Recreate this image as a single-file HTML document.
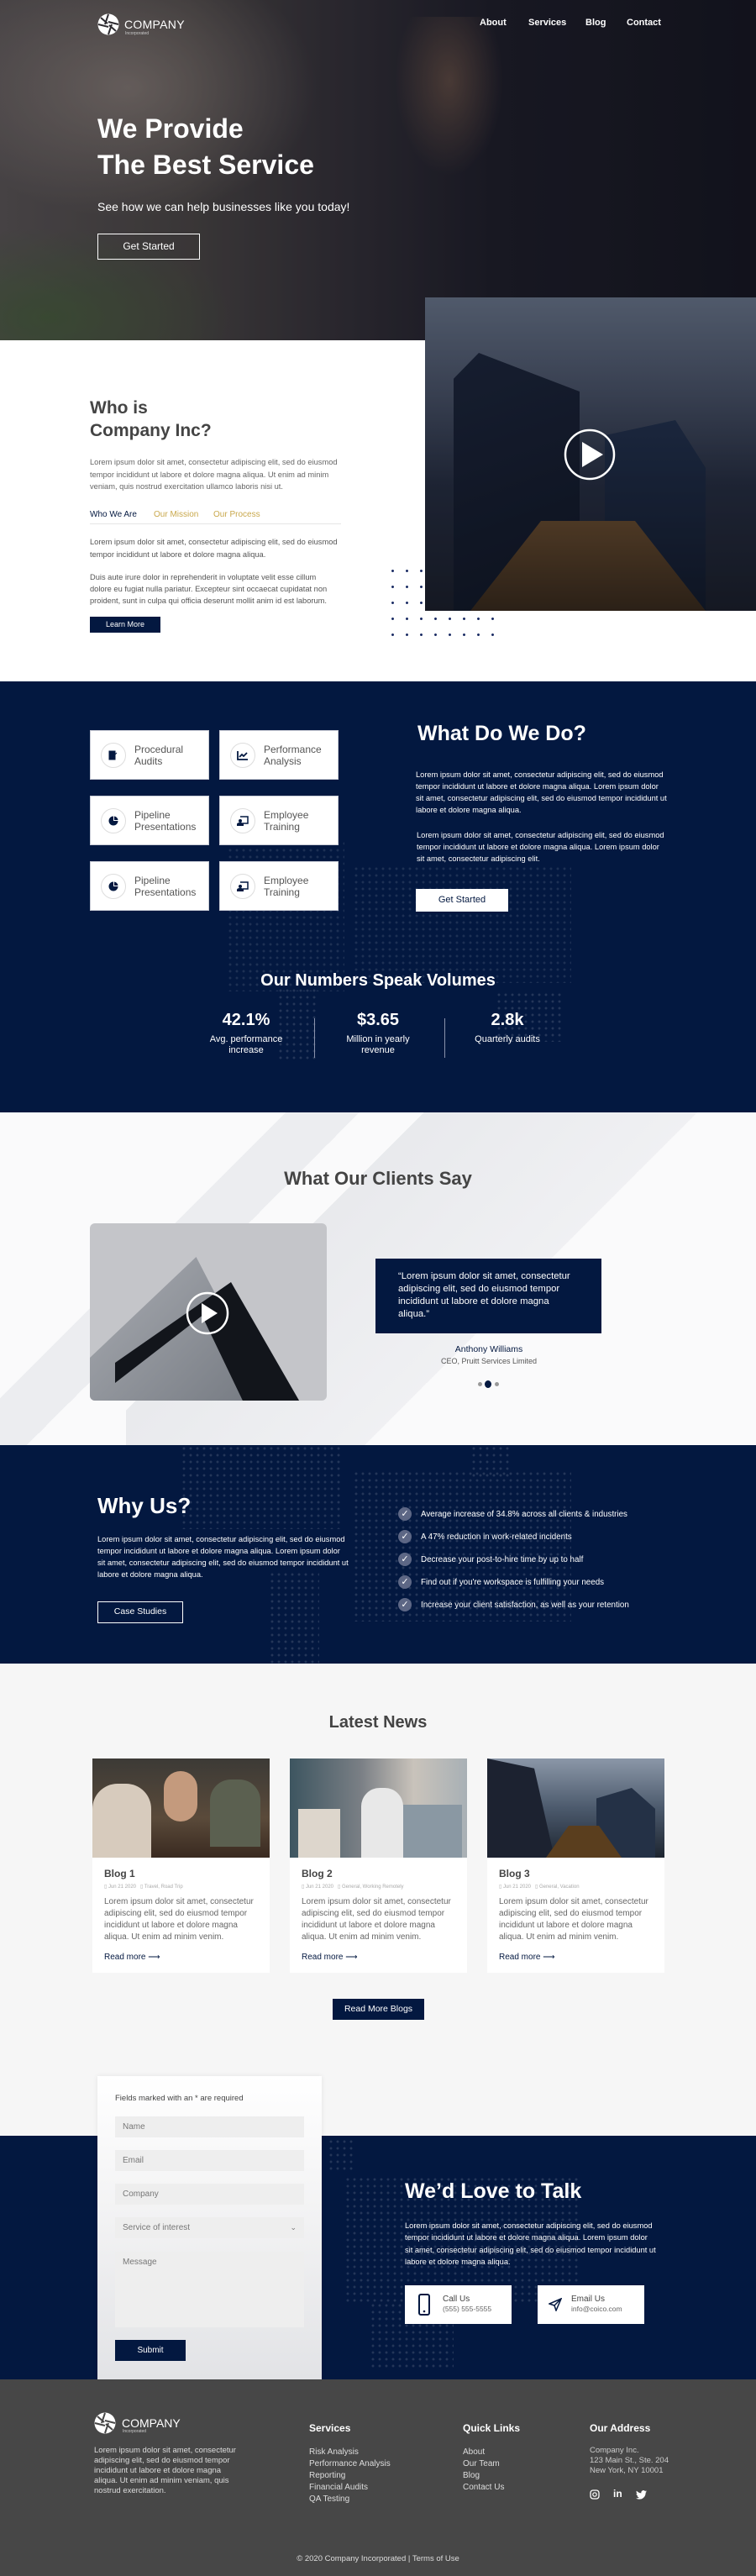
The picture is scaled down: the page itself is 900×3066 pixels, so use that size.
<!DOCTYPE html>
<html><head><meta charset="utf-8"><style>
*{margin:0;padding:0;box-sizing:border-box}
body{width:900px;height:3066px;position:relative;font-family:"Liberation Sans",sans-serif;background:#fff;overflow:hidden}
.a{position:absolute}
.navy{background:#031840}
.dots{background-image:radial-gradient(circle,rgba(255,255,255,.13) 1.3px,transparent 1.6px);background-size:8px 8px}
.ddots{background-image:radial-gradient(circle,#1e2f66 1.3px,transparent 1.7px);background-size:17px 19px}
p{margin:0}
.card{background:#fff;border:1px solid #c9ccd6}
.ic{position:absolute;left:12px;top:14px;width:30px;height:30px;border:1px solid #ddd;border-radius:50%;display:flex;align-items:center;justify-content:center}
.ct{position:absolute;left:52px;top:15px;font-size:12px;color:#555;line-height:14px}
.wt{color:#fff}
.blog{background:#fff}
.blog h4{position:absolute;left:14px;top:130px;font-size:12px;color:#444}
.blog .m{position:absolute;left:14px;top:149px;font-size:6px;color:#aaa}
.blog .p{position:absolute;left:14px;top:164px;width:185px;font-size:10px;line-height:14px;color:#666}
.blog .r{position:absolute;left:14px;top:231px;font-size:10px;color:#031840}
.inp{position:absolute;left:21px;width:225px;height:25px;background:#eee;font-size:10px;color:#777;padding:7px 9px}
.fh{font-size:12px;font-weight:bold;color:#fff}
.fl{font-size:10px;color:#ddd;line-height:14px}
</style></head><body>

<!-- HERO -->
<div class="a" style="left:0;top:0;width:900px;height:405px;background:linear-gradient(90deg,#55504f 0%,#46423f 25%,#312e33 45%,#1c1c25 65%,#14151d 100%)"></div>
<div class="a" style="left:0;top:0;width:380px;height:260px;background:radial-gradient(ellipse at 40% 40%,rgba(170,155,145,.5),transparent 70%)"></div>
<div class="a" style="left:0;top:270px;width:280px;height:135px;background:radial-gradient(ellipse at 20% 80%,rgba(60,95,45,.6),transparent 70%)"></div>
<div class="a" style="left:470px;top:20px;width:130px;height:190px;background:radial-gradient(ellipse at 50% 40%,rgba(170,125,90,.4),transparent 70%)"></div>
<div class="a" style="left:0;top:0;width:900px;height:405px;background:rgba(10,12,25,.2)"></div>
<svg class="a" style="left:116px;top:16px" width="26" height="26" viewBox="0 0 26 26"><circle cx="13" cy="13" r="12.5" fill="#fff"/><path d="M13 1 L9 13 M25 13 L13 10 M13 25 L17 13 M1 13 L13 16 M4 5 L12 12 M22 21 L14 14" stroke="#2d2b30" stroke-width="2"/></svg>
<div class="a" style="left:148px;top:21px;font-size:14px;color:#fff;letter-spacing:.3px">COMPANY</div>
<div class="a" style="left:149px;top:37px;font-size:5px;color:#ccc">Incorporated</div>
<div class="a" style="left:571px;top:21px;font-size:11px;font-weight:bold;color:#fff">About</div>
<div class="a" style="left:629px;top:21px;font-size:11px;font-weight:bold;color:#fff">Services</div>
<div class="a" style="left:697px;top:21px;font-size:11px;font-weight:bold;color:#fff">Blog</div>
<div class="a" style="left:746px;top:21px;font-size:11px;font-weight:bold;color:#fff">Contact</div>
<div class="a" style="left:116px;top:132px;font-size:32px;font-weight:bold;color:#fff;line-height:43px">We Provide<br>The Best Service</div>
<div class="a" style="left:116px;top:238px;font-size:14px;color:#fff">See how we can help businesses like you today!</div>
<div class="a" style="left:116px;top:278px;width:122px;height:31px;border:1.5px solid #fff;color:#fff;font-size:12px;text-align:center;line-height:28px">Get Started</div>

<!-- WHO IS -->
<div class="a" style="left:506px;top:354px;width:394px;height:373px;background:linear-gradient(180deg,#6f7a8a 0%,#4d5565 30%,#262c3a 60%,#1a1c22 100%)"></div>
<div class="a" style="left:540px;top:420px;width:150px;height:307px;background:linear-gradient(160deg,#1c2435,#0f131c);clip-path:polygon(20% 0,100% 15%,100% 100%,0 100%,0 10%)"></div>
<div class="a" style="left:720px;top:500px;width:120px;height:227px;background:linear-gradient(180deg,#223048,#111722);clip-path:polygon(0 8%,70% 0,100% 25%,100% 100%,0 100%)"></div>
<div class="a" style="left:560px;top:620px;width:280px;height:107px;background:linear-gradient(180deg,#6a4a25,#3a2812);clip-path:polygon(30% 0,70% 0,100% 100%,0 100%)"></div>
<div class="a" style="left:506px;top:354px;width:394px;height:373px;background:rgba(10,15,35,.3)"></div>
<svg class="a" style="left:671px;top:509px" width="62" height="64" viewBox="0 0 62 64"><circle cx="31" cy="32" r="29" fill="none" stroke="#fff" stroke-width="2.5"/><path d="M22 17 L47 32 L22 47 Z" fill="#fff"/></svg>
<div class="a ddots" style="left:459px;top:670px;width:51px;height:95px"></div>
<div class="a ddots" style="left:510px;top:727px;width:85px;height:38px"></div>
<div class="a" style="left:107px;top:472px;font-size:21px;font-weight:bold;color:#444;line-height:27px">Who is<br>Company Inc?</div>
<div class="a" style="left:107px;top:543px;width:300px;font-size:9.3px;line-height:14.5px;color:#666">Lorem ipsum dolor sit amet, consectetur adipiscing elit, sed do eiusmod tempor incididunt ut labore et dolore magna aliqua. Ut enim ad minim veniam, quis nostrud exercitation ullamco laboris nisi ut.</div>
<div class="a" style="left:107px;top:607px;font-size:10px;color:#031840">Who We Are</div>
<div class="a" style="left:183px;top:607px;font-size:10px;color:#c9a84c">Our Mission</div>
<div class="a" style="left:254px;top:607px;font-size:10px;color:#c9a84c">Our Process</div>
<div class="a" style="left:107px;top:623px;width:299px;height:1px;background:#e5e5e5"></div>
<div class="a" style="left:107px;top:638px;width:300px;font-size:9.3px;line-height:14.5px;color:#555">Lorem ipsum dolor sit amet, consectetur adipiscing elit, sed do eiusmod tempor incididunt ut labore et dolore magna aliqua.</div>
<div class="a" style="left:107px;top:680px;width:295px;font-size:9.3px;line-height:14px;color:#555">Duis aute irure dolor in reprehenderit in voluptate velit esse cillum dolore eu fugiat nulla pariatur. Excepteur sint occaecat cupidatat non proident, sunt in culpa qui officia deserunt mollit anim id est laborum.</div>
<div class="a navy" style="left:107px;top:734px;width:84px;height:19px;color:#fff;font-size:9px;text-align:center;line-height:19px">Learn More</div>

<!-- WHAT WE DO -->
<div class="a navy" style="left:0;top:811px;width:900px;height:513px"></div>
<div class="a dots" style="left:270px;top:1000px;width:140px;height:180px;opacity:.8"></div>
<div class="a dots" style="left:420px;top:1030px;width:260px;height:140px;opacity:.8"></div>
<div class="a dots" style="left:330px;top:1175px;width:50px;height:90px"></div>
<div class="a dots" style="left:590px;top:1180px;width:80px;height:60px"></div>
<div class="a card" style="left:107px;top:869px;width:142px;height:59px"><div class="ic"><svg width="12" height="12" viewBox="0 0 12 12"><path d="M1 1h7v10H1z M5 8l5-5" fill="#031840" stroke="#031840"/></svg></div><div class="ct">Procedural<br>Audits</div></div>
<div class="a card" style="left:261px;top:869px;width:142px;height:59px"><div class="ic"><svg width="14" height="12" viewBox="0 0 14 12"><path d="M1 1v10h12 M3 8l3-3 2 2 4-4" fill="none" stroke="#031840" stroke-width="1.8"/></svg></div><div class="ct">Performance<br>Analysis</div></div>
<div class="a card" style="left:107px;top:947px;width:142px;height:59px"><div class="ic"><svg width="12" height="12" viewBox="0 0 12 12"><path d="M6 6V0.5A5.5 5.5 0 1 0 11.5 6Z M7 5V0.5A5 5 0 0 1 11.5 5Z" fill="#031840"/></svg></div><div class="ct">Pipeline<br>Presentations</div></div>
<div class="a card" style="left:261px;top:947px;width:142px;height:59px"><div class="ic"><svg width="14" height="12" viewBox="0 0 14 12"><path d="M4 1h9v8H7" fill="none" stroke="#031840" stroke-width="1.5"/><circle cx="4" cy="6" r="2" fill="#031840"/><path d="M0 12v-2q0-2 4-2t4 2v2z" fill="#031840"/></svg></div><div class="ct">Employee<br>Training</div></div>
<div class="a card" style="left:107px;top:1025px;width:142px;height:59px"><div class="ic"><svg width="12" height="12" viewBox="0 0 12 12"><path d="M6 6V0.5A5.5 5.5 0 1 0 11.5 6Z M7 5V0.5A5 5 0 0 1 11.5 5Z" fill="#031840"/></svg></div><div class="ct">Pipeline<br>Presentations</div></div>
<div class="a card" style="left:261px;top:1025px;width:142px;height:59px"><div class="ic"><svg width="14" height="12" viewBox="0 0 14 12"><path d="M4 1h9v8H7" fill="none" stroke="#031840" stroke-width="1.5"/><circle cx="4" cy="6" r="2" fill="#031840"/><path d="M0 12v-2q0-2 4-2t4 2v2z" fill="#031840"/></svg></div><div class="ct">Employee<br>Training</div></div>
<div class="a wt" style="left:497px;top:859px;font-size:25px;font-weight:bold">What Do We Do?</div>
<div class="a wt" style="left:495px;top:915px;width:300px;font-size:9.3px;line-height:14px">Lorem ipsum dolor sit amet, consectetur adipiscing elit, sed do eiusmod tempor incididunt ut labore et dolore magna aliqua. Lorem ipsum dolor sit amet, consectetur adipiscing elit, sed do eiusmod tempor incididunt ut labore et dolore magna aliqua.</div>
<div class="a wt" style="left:496px;top:987px;width:300px;font-size:9.3px;line-height:14px">Lorem ipsum dolor sit amet, consectetur adipiscing elit, sed do eiusmod tempor incididunt ut labore et dolore magna aliqua. Lorem ipsum dolor sit amet, consectetur adipiscing elit.</div>
<div class="a" style="left:495px;top:1058px;width:110px;height:27px;background:#fff;color:#031840;font-size:11px;text-align:center;line-height:27px">Get Started</div>
<div class="a wt" style="left:0;top:1156px;width:900px;text-align:center;font-size:20px;font-weight:bold">Our Numbers Speak Volumes</div>
<div class="a wt" style="left:213px;top:1203px;width:160px;text-align:center;font-size:20px;font-weight:bold">42.1%</div>
<div class="a wt" style="left:213px;top:1231px;width:160px;text-align:center;font-size:11px;line-height:13px">Avg. performance<br>increase</div>
<div class="a" style="left:374px;top:1212px;width:1px;height:47px;background:#8a93ad"></div>
<div class="a wt" style="left:370px;top:1203px;width:160px;text-align:center;font-size:20px;font-weight:bold">$3.65</div>
<div class="a wt" style="left:370px;top:1231px;width:160px;text-align:center;font-size:11px;line-height:13px">Million in yearly<br>revenue</div>
<div class="a" style="left:529px;top:1212px;width:1px;height:47px;background:#8a93ad"></div>
<div class="a wt" style="left:524px;top:1203px;width:160px;text-align:center;font-size:20px;font-weight:bold">2.8k</div>
<div class="a wt" style="left:524px;top:1231px;width:160px;text-align:center;font-size:11px">Quarterly audits</div>

<!-- CLIENTS -->
<div class="a" style="left:0;top:1324px;width:900px;height:396px;background:#fafafb;overflow:hidden">
 <div class="a" style="left:150px;top:-100px;width:700px;height:600px;background:linear-gradient(135deg,transparent 35%,rgba(200,203,210,.35) 35%,rgba(220,222,228,.35) 60%,transparent 60%)"></div>
 <div class="a" style="left:-100px;top:0;width:600px;height:500px;background:linear-gradient(135deg,transparent 40%,rgba(215,218,224,.4) 40%,rgba(215,218,224,.4) 48%,transparent 48%)"></div>
</div>
<div class="a" style="left:0;top:1390px;width:900px;text-align:center;font-size:22px;font-weight:bold;color:#444">What Our Clients Say</div>
<div class="a" style="left:107px;top:1456px;width:282px;height:211px;border-radius:6px;overflow:hidden;background:#c4c5c9">
 <div class="a" style="left:0;top:40px;width:230px;height:200px;background:linear-gradient(135deg,#a9acb2,#6e737b);clip-path:polygon(55% 0,100% 100%,0 100%,0 60%)"></div>
 <div class="a" style="left:30px;top:70px;width:230px;height:160px;background:#12151b;clip-path:polygon(60% 0,100% 100%,70% 100%,45% 25%,0 75%,0 60%)"></div>
 <svg class="a" style="left:114px;top:81px" width="52" height="52" viewBox="0 0 52 52"><circle cx="26" cy="26" r="24" fill="none" stroke="#fff" stroke-width="2.5"/><path d="M19 14 L38 26 L19 38Z" fill="#fff"/></svg>
</div>
<div class="a navy" style="left:447px;top:1498px;width:269px;height:89px"></div>
<div class="a wt" style="left:474px;top:1512px;width:212px;font-size:11.3px;line-height:15px">“Lorem ipsum dolor sit amet, consectetur adipiscing elit, sed do eiusmod tempor incididunt ut labore et dolore magna aliqua.”</div>
<div class="a" style="left:447px;top:1600px;width:270px;text-align:center;font-size:10.5px;color:#031840">Anthony Williams</div>
<div class="a" style="left:447px;top:1615px;width:270px;text-align:center;font-size:9px;color:#555">CEO, Pruitt Services Limited</div>
<div class="a" style="left:569px;top:1645px;width:5px;height:5px;border-radius:50%;background:#999"></div>
<div class="a" style="left:577px;top:1643px;width:8px;height:9px;border-radius:50%;background:#031840"></div>
<div class="a" style="left:589px;top:1645px;width:5px;height:5px;border-radius:50%;background:#999"></div>

<!-- WHY US -->
<div class="a navy" style="left:0;top:1720px;width:900px;height:260px"></div>
<div class="a dots" style="left:215px;top:1720px;width:190px;height:100px"></div>
<div class="a dots" style="left:320px;top:1870px;width:60px;height:110px"></div>
<div class="a dots" style="left:420px;top:1750px;width:260px;height:180px"></div>
<div class="a dots" style="left:560px;top:1720px;width:50px;height:40px"></div>
<div class="a wt" style="left:116px;top:1777px;font-size:26px;font-weight:bold">Why Us?</div>
<div class="a wt" style="left:116px;top:1825px;width:300px;font-size:9.3px;line-height:14px">Lorem ipsum dolor sit amet, consectetur adipiscing elit, sed do eiusmod tempor incididunt ut labore et dolore magna aliqua. Lorem ipsum dolor sit amet, consectetur adipiscing elit, sed do eiusmod tempor incididunt ut labore et dolore magna aliqua.</div>
<div class="a" style="left:116px;top:1906px;width:102px;height:26px;border:1.5px solid #fff;color:#fff;font-size:10.5px;text-align:center;line-height:23px">Case Studies</div>
<div class="a" style="left:474px;top:1789px;font-size:9.8px;color:#fff;line-height:27px">
<div><span style="display:inline-block;width:16px;height:16px;border-radius:50%;background:#5d6785;color:#fff;text-align:center;line-height:16px;font-size:11px;margin-right:11px;vertical-align:middle">✓</span>Average increase of 34.8% across all clients &amp; industries</div>
<div><span style="display:inline-block;width:16px;height:16px;border-radius:50%;background:#5d6785;text-align:center;line-height:16px;font-size:11px;margin-right:11px;vertical-align:middle">✓</span>A 47% reduction in work-related incidents</div>
<div><span style="display:inline-block;width:16px;height:16px;border-radius:50%;background:#5d6785;text-align:center;line-height:16px;font-size:11px;margin-right:11px;vertical-align:middle">✓</span>Decrease your post-to-hire time by up to half</div>
<div><span style="display:inline-block;width:16px;height:16px;border-radius:50%;background:#5d6785;text-align:center;line-height:16px;font-size:11px;margin-right:11px;vertical-align:middle">✓</span>Find out if you're workspace is fulfilling your needs</div>
<div><span style="display:inline-block;width:16px;height:16px;border-radius:50%;background:#5d6785;text-align:center;line-height:16px;font-size:11px;margin-right:11px;vertical-align:middle">✓</span>Increase your client satisfaction, as well as your retention</div>
</div>

<!-- NEWS -->
<div class="a" style="left:0;top:1980px;width:900px;height:562px;background:#f6f6f6"></div>
<div class="a" style="left:0;top:2039px;width:900px;text-align:center;font-size:20px;font-weight:bold;color:#444">Latest News</div>
<div class="a blog" style="left:110px;top:2093px;width:211px;height:255px">
 <div class="a" style="left:0;top:0;width:211px;height:118px;background:linear-gradient(180deg,#3c3a36,#5a4a3a 60%,#3a2a20)"><div class="a" style="left:0;top:30px;width:70px;height:88px;background:#d7cbbd;border-radius:30px 30px 0 0"></div><div class="a" style="left:85px;top:15px;width:40px;height:60px;background:#c49a7d;border-radius:20px"></div><div class="a" style="left:140px;top:25px;width:60px;height:80px;background:#5b6050;border-radius:25px 25px 0 0"></div></div>
 <h4>Blog 1</h4><div class="m">▯ Jun 21 2020 &nbsp; ▯ Travel, Road Trip</div>
 <div class="p">Lorem ipsum dolor sit amet, consectetur adipiscing elit, sed do eiusmod tempor incididunt ut labore et dolore magna aliqua. Ut enim ad minim venim.</div>
 <div class="r">Read more ⟶</div></div>
<div class="a blog" style="left:345px;top:2093px;width:211px;height:255px">
 <div class="a" style="left:0;top:0;width:211px;height:118px;background:linear-gradient(90deg,#3d5560,#7a7f85 40%,#c9c3bb 70%,#a8b0b5)"><div class="a" style="left:85px;top:35px;width:50px;height:83px;background:#e8e8e8;border-radius:22px 22px 0 0"></div><div class="a" style="left:135px;top:55px;width:70px;height:63px;background:#8a98a3"></div><div class="a" style="left:10px;top:60px;width:50px;height:58px;background:#ddd6cc"></div></div>
 <h4>Blog 2</h4><div class="m">▯ Jun 21 2020 &nbsp; ▯ General, Working Remotely</div>
 <div class="p">Lorem ipsum dolor sit amet, consectetur adipiscing elit, sed do eiusmod tempor incididunt ut labore et dolore magna aliqua. Ut enim ad minim venim.</div>
 <div class="r">Read more ⟶</div></div>
<div class="a blog" style="left:580px;top:2093px;width:211px;height:255px">
 <div class="a" style="left:0;top:0;width:211px;height:118px;background:linear-gradient(180deg,#8b97a8,#4c5a6d 50%,#1d2530)"><div class="a" style="left:0;top:0;width:80px;height:118px;background:#1c2230;clip-path:polygon(0 0,70% 10%,100% 100%,0 100%)"></div><div class="a" style="left:130px;top:35px;width:70px;height:83px;background:#243146;clip-path:polygon(0 15%,60% 0,100% 30%,100% 100%,0 100%)"></div><div class="a" style="left:70px;top:80px;width:90px;height:38px;background:#5a3e1e;clip-path:polygon(30% 0,70% 0,100% 100%,0 100%)"></div></div>
 <h4>Blog 3</h4><div class="m">▯ Jun 21 2020 &nbsp; ▯ General, Vacation</div>
 <div class="p">Lorem ipsum dolor sit amet, consectetur adipiscing elit, sed do eiusmod tempor incididunt ut labore et dolore magna aliqua. Ut enim ad minim venim.</div>
 <div class="r">Read more ⟶</div></div>
<div class="a navy" style="left:396px;top:2379px;width:109px;height:25px;color:#fff;font-size:10.5px;text-align:center;line-height:25px">Read More Blogs</div>

<!-- CONTACT -->
<div class="a navy" style="left:0;top:2542px;width:900px;height:290px"></div>
<div class="a dots" style="left:390px;top:2545px;width:30px;height:40px"></div>
<div class="a dots" style="left:410px;top:2590px;width:280px;height:150px"></div>
<div class="a dots" style="left:440px;top:2740px;width:100px;height:80px"></div>
<div class="a" style="left:116px;top:2471px;width:267px;height:361px;background:linear-gradient(180deg,#fff 0%,#f4f4f5 40%,#e2e3e6 100%);box-shadow:0 0 6px rgba(0,0,0,.08)"></div>
<div class="a" style="left:137px;top:2492px;font-size:9.5px;color:#444">Fields marked with an * are required</div>
<div class="inp" style="left:137px;top:2519px">Name</div>
<div class="inp" style="left:137px;top:2559px">Email</div>
<div class="inp" style="left:137px;top:2599px">Company</div>
<div class="inp" style="left:137px;top:2639px">Service of interest<span style="float:right;font-size:9px">⌄</span></div>
<div class="inp" style="left:137px;top:2680px;height:90px">Message</div>
<div class="a navy" style="left:137px;top:2785px;width:84px;height:25px;color:#fff;font-size:10px;text-align:center;line-height:25px">Submit</div>
<div class="a wt" style="left:482px;top:2594px;font-size:25px;font-weight:bold">We’d Love to Talk</div>
<div class="a wt" style="left:482px;top:2642px;width:300px;font-size:9.3px;line-height:14.3px">Lorem ipsum dolor sit amet, consectetur adipiscing elit, sed do eiusmod tempor incididunt ut labore et dolore magna aliqua. Lorem ipsum dolor sit amet, consectetur adipiscing elit, sed do eiusmod tempor incididunt ut labore et dolore magna aliqua.</div>
<div class="a" style="left:482px;top:2720px;width:127px;height:46px;background:#fff">
 <svg class="a" style="left:16px;top:10px" width="14" height="26" viewBox="0 0 14 26"><rect x="1" y="1" width="12" height="24" rx="2" fill="none" stroke="#031840" stroke-width="2"/><circle cx="7" cy="21" r="1.3" fill="#031840"/></svg>
 <div class="a" style="left:45px;top:11px;font-size:10px;color:#444">Call Us</div><div class="a" style="left:45px;top:23px;font-size:8.5px;color:#666">(555) 555-5555</div></div>
<div class="a" style="left:640px;top:2720px;width:127px;height:46px;background:#fff">
 <svg class="a" style="left:13px;top:15px" width="16" height="16" viewBox="0 0 16 16"><path d="M15 1 L1 7 L7 9 L9 15 Z M7 9 L15 1" fill="none" stroke="#031840" stroke-width="1.5"/></svg>
 <div class="a" style="left:40px;top:11px;font-size:10px;color:#444">Email Us</div><div class="a" style="left:40px;top:23px;font-size:8.5px;color:#666">info@coico.com</div></div>

<!-- FOOTER -->
<div class="a" style="left:0;top:2832px;width:900px;height:234px;background:#474747"></div>
<svg class="a" style="left:112px;top:2871px" width="26" height="26" viewBox="0 0 26 26"><circle cx="13" cy="13" r="12.5" fill="#fff"/><path d="M13 1 L9 13 M25 13 L13 10 M13 25 L17 13 M1 13 L13 16 M4 5 L12 12 M22 21 L14 14" stroke="#474747" stroke-width="2"/></svg>
<div class="a" style="left:145px;top:2876px;font-size:14px;color:#fff">COMPANY</div>
<div class="a" style="left:146px;top:2891px;font-size:5px;color:#ccc">Incorporated</div>
<div class="a fl" style="left:112px;top:2911px;width:175px;font-size:9.5px;line-height:12px">Lorem ipsum dolor sit amet, consectetur adipiscing elit, sed do eiusmod tempor incididunt ut labore et dolore magna aliqua. Ut enim ad minim veniam, quis nostrud exercitation.</div>
<div class="a fh" style="left:368px;top:2883px">Services</div>
<div class="a fl" style="left:368px;top:2912px">Risk Analysis<br>Performance Analysis<br>Reporting<br>Financial Audits<br>QA Testing</div>
<div class="a fh" style="left:551px;top:2883px">Quick Links</div>
<div class="a fl" style="left:551px;top:2912px">About<br>Our Team<br>Blog<br>Contact Us</div>
<div class="a fh" style="left:702px;top:2883px">Our Address</div>
<div class="a fl" style="left:702px;top:2911px;font-size:9.5px;line-height:12px;color:#ccc">Company Inc.<br>123 Main St., Ste. 204<br>New York, NY 10001</div>
<svg class="a" style="left:702px;top:2963px" width="12" height="12" viewBox="0 0 12 12"><rect x="1" y="1" width="10" height="10" rx="3" fill="none" stroke="#fff" stroke-width="1.3"/><circle cx="6" cy="6" r="2.2" fill="none" stroke="#fff" stroke-width="1.2"/></svg>
<div class="a" style="left:730px;top:2961px;font-size:12px;font-weight:bold;color:#fff">in</div>
<svg class="a" style="left:757px;top:2964px" width="13" height="11" viewBox="0 0 24 20"><path d="M24 2.4a10 10 0 0 1-2.8.8A5 5 0 0 0 23.3.4a10 10 0 0 1-3.1 1.2A4.9 4.9 0 0 0 11.8 6 14 14 0 0 1 1.7.9a4.9 4.9 0 0 0 1.5 6.6A4.9 4.9 0 0 1 1 6.9a4.9 4.9 0 0 0 3.9 4.8 5 5 0 0 1-2.2.1 4.9 4.9 0 0 0 4.6 3.4A9.9 9.9 0 0 1 0 17.3 14 14 0 0 0 7.5 19.5c9 0 14-7.5 14-14v-.6A10 10 0 0 0 24 2.4z" fill="#fff"/></svg>
<div class="a" style="left:0;top:3040px;width:900px;text-align:center;font-size:9.5px;color:#ddd">© 2020 Company Incorporated | Terms of Use</div>
</body></html>
